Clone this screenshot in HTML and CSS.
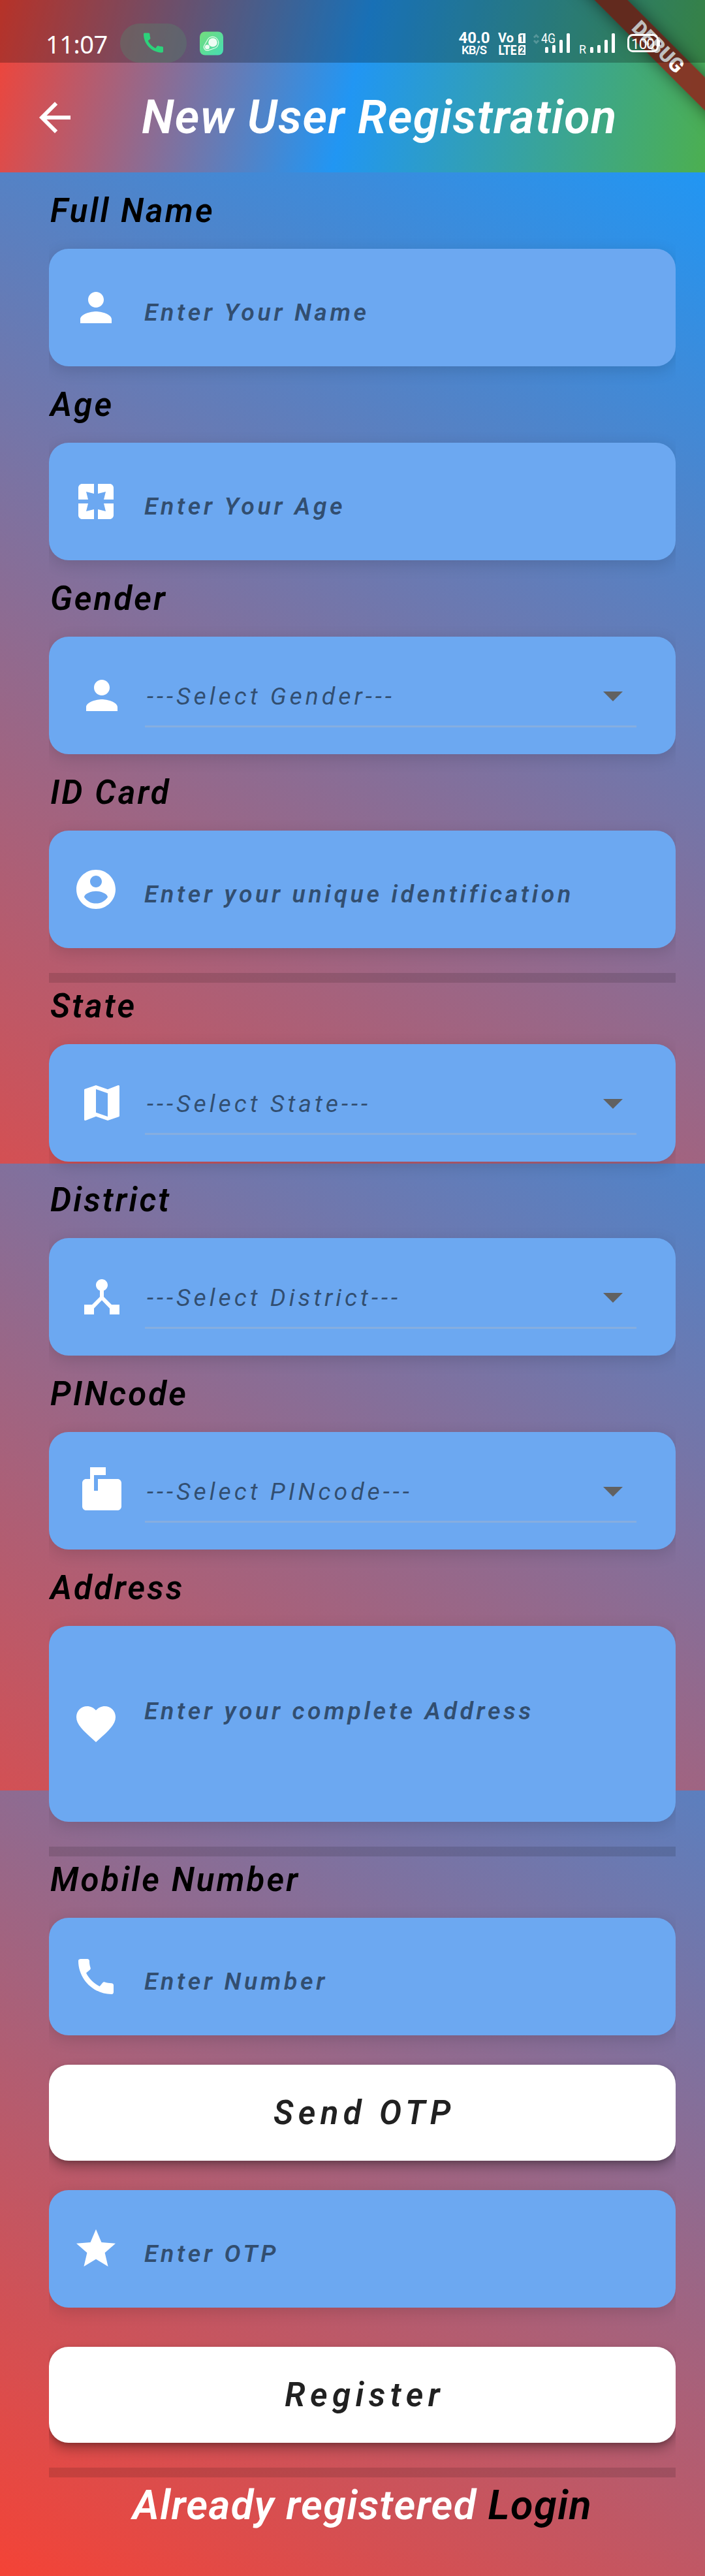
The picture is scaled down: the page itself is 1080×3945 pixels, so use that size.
FILE: index.html
```html
<!DOCTYPE html>
<html lang="en">
<head>
<meta charset="utf-8">
<title>New User Registration</title>
<link rel="stylesheet" href="styles.css">
</head>
<body>
<div class="phone">
  <header class="appbar">
    <svg class="icon back" viewBox="0 0 24 24"><path d="M20 11H7.83l5.59-5.59L12 4l-8 8 8 8 1.41-1.41L7.83 13H20v-2z"/></svg>
    <h1 class="title">New User Registration</h1>
    <div class="debug"><span class="debug-band">DEBUG</span></div>
    <div class="status">
      <span class="clock">11:07</span>
      <span class="call-pill"><svg class="call" viewBox="3 3 18 18"><path d="M20.01 15.38c-1.23 0-2.42-.2-3.53-.56-.35-.12-.74-.03-1.01.24l-1.57 1.97c-2.83-1.35-5.48-3.9-6.89-6.83l1.95-1.66c.27-.28.35-.67.24-1.02-.37-1.11-.56-2.3-.56-3.53 0-.54-.45-.99-.99-.99H4.19C3.65 3 3 3.24 3 3.99 3 13.28 10.73 21 20.01 21c.71 0 .99-.63.99-1.18v-3.45c0-.54-.45-.99-.99-.99z"/></svg></span>
      <svg class="app-badge" viewBox="0 0 36 36">
        <defs>
          <linearGradient id="badge" x1="0" y1="0" x2="1" y2="1"><stop offset="0" stop-color="#74dc7c"/><stop offset="1" stop-color="#46deb4"/></linearGradient>
        </defs>
        <rect width="36" height="36" rx="8" fill="url(#badge)"/>
        <path d="M7 21 L12.500 11.500 A9 9 0 1 1 23 25.300 L12.500 28.800 A5.300 5.300 0 0 1 7 21Z" fill="none" stroke="#e4fbea" stroke-width="1.200"/>
        <circle cx="20" cy="16.500" r="6.800" fill="#effcf3"/>
        <circle cx="11.500" cy="23.500" r="3.500" fill="#effcf3"/>
      </svg>
      <svg class="signals" viewBox="690 36 330 60">
        <g class="st-text">
          <text x="726.500" y="66" text-anchor="middle" font-size="24" font-weight="700" textLength="48">40.0</text>
          <text x="726.500" y="83" text-anchor="middle" font-size="18.500" font-weight="600" textLength="39">KB/S</text>
          <text x="763" y="65" font-size="20" font-weight="700" textLength="24">Vo</text>
          <text x="763.500" y="84" font-size="20.500" font-weight="800" textLength="28" lengthAdjust="spacingAndGlyphs">LTE</text>
          <text x="829" y="65.500" font-size="20" textLength="22" lengthAdjust="spacingAndGlyphs">4G</text>
          <text x="887" y="82" font-size="18" textLength="11" lengthAdjust="spacingAndGlyphs">R</text>
          <text x="967" y="75" font-size="22.500" textLength="36">100</text>
        </g>
        <path d="M796.500 51H805V66H794V53.500zM794 71.500 796.500 69H805V84H794z" fill="#fff"/>
        <text class="sim" x="795.500" y="63.500">1</text>
        <text class="sim" x="795.500" y="81.500">2</text>
        <path d="M818 57.500 821.500 54 825 57.500M818 62 821.500 65.500 825 62" fill="none" stroke="#fff" stroke-opacity=".22" stroke-width="3"/>
        <g fill="#fff">
          <rect x="835" y="72" width="5" height="9" rx="1.500"/><rect x="846" y="69" width="5" height="12" rx="1.500"/><rect x="857" y="61" width="5" height="20" rx="1.500"/><rect x="868" y="51" width="5" height="30" rx="1.500"/>
          <rect x="904" y="72" width="5" height="9" rx="1.500"/><rect x="915" y="69" width="5" height="12" rx="1.500"/><rect x="926" y="61" width="5" height="20" rx="1.500"/><rect x="937" y="51" width="5" height="30" rx="1.500"/>
          <rect x="1007.500" y="61" width="3.500" height="10" rx="1.500"/>
        </g>
        <rect x="962.500" y="53.500" width="45" height="25" rx="7" fill="none" stroke="#fff" stroke-width="3"/>
      </svg>
    </div>
  </header>

  <main class="screen">
    <div class="backdrop">
      <div class="bg bg-top"></div>
      <div class="bg bg-middle"></div>
      <div class="bg bg-bottom"></div>
    </div>

    <form class="form">
      <label class="label first">Full Name</label>
      <div class="field">
        <svg class="icon" viewBox="0 0 24 24"><path d="M12 12c2.210 0 4-1.790 4-4s-1.790-4-4-4-4 1.790-4 4 1.790 4 4 4zm0 2c-2.670 0-8 1.340-8 4v2h16v-2c0-2.660-5.330-4-8-4z"/></svg>
        <span class="hint">Enter Your Name</span>
      </div>

      <label class="label">Age</label>
      <div class="field">
        <svg class="icon" viewBox="0 0 24 24"><path d="M3 5v6h5L7 7l4 1V3H5c-1.100 0-2 .9-2 2zm5 8H3v6c0 1.100.9 2 2 2h6v-5l-4 1 1-4zm9 4l-4-1v5h6c1.100 0 2-.9 2-2v-6h-5l1 4zm2-14h-6v5l4-1-1 4h5V5c0-1.100-.9-2-2-2z"/></svg>
        <span class="hint">Enter Your Age</span>
      </div>

      <label class="label">Gender</label>
      <div class="field dropdown">
        <svg class="icon" viewBox="0 0 24 24"><path d="M12 12c2.210 0 4-1.790 4-4s-1.790-4-4-4-4 1.790-4 4 1.790 4 4 4zm0 2c-2.670 0-8 1.340-8 4v2h16v-2c0-2.660-5.330-4-8-4z"/></svg>
        <div class="select"><span>---Select Gender---</span><svg class="icon arrow" viewBox="0 0 24 24"><path d="M7 10l5 5 5-5z"/></svg></div>
      </div>

      <label class="label">ID Card</label>
      <div class="field">
        <svg class="icon" viewBox="0 0 24 24"><path d="M12 2C6.480 2 2 6.480 2 12s4.480 10 10 10 10-4.480 10-10S17.520 2 12 2zm0 3c1.660 0 3 1.340 3 3s-1.340 3-3 3-3-1.340-3-3 1.340-3 3-3zm0 14.200c-2.500 0-4.710-1.280-6-3.220.03-1.990 4-3.080 6-3.080 1.990 0 5.970 1.090 6 3.080-1.290 1.940-3.500 3.220-6 3.220z"/></svg>
        <span class="hint">Enter your unique identification</span>
      </div>

      <div class="divider"></div>

      <label class="label after-divider">State</label>
      <div class="field dropdown">
        <svg class="icon" viewBox="0 0 24 24"><path d="M20.500 3l-.16.03L15 5.100 9 3 3.360 4.900c-.21.07-.36.25-.36.48V20.500c0 .28.22.5.5.5l.16-.03L9 18.900l6 2.100 5.640-1.900c.21-.07.36-.25.36-.48V3.500c0-.28-.22-.5-.5-.5zM15 19l-6-2.110V5l6 2.110V19z"/></svg>
        <div class="select"><span>---Select State---</span><svg class="icon arrow" viewBox="0 0 24 24"><path d="M7 10l5 5 5-5z"/></svg></div>
      </div>

      <label class="label">District</label>
      <div class="field dropdown">
        <svg class="icon" viewBox="0 0 24 24"><path d="M17 16l-4-4V8.820C14.160 8.400 15 7.300 15 6c0-1.660-1.340-3-3-3S9 4.340 9 6c0 1.300.84 2.400 2 2.820V12l-4 4H3v5h5v-3.050l4-4.200 4 4.200V21h5v-5h-4z"/></svg>
        <div class="select"><span>---Select District---</span><svg class="icon arrow" viewBox="0 0 24 24"><path d="M7 10l5 5 5-5z"/></svg></div>
      </div>

      <label class="label">PINcode</label>
      <div class="field dropdown">
        <svg class="icon" viewBox="0 0 24 24"><path d="M20 6H10v6H8V4h6V0H6v6H4c-1.100 0-2 .9-2 2v12c0 1.100.9 2 2 2h16c1.100 0 2-.9 2-2V8c0-1.100-.9-2-2-2z"/></svg>
        <div class="select"><span>---Select PINcode---</span><svg class="icon arrow" viewBox="0 0 24 24"><path d="M7 10l5 5 5-5z"/></svg></div>
      </div>

      <label class="label">Address</label>
      <div class="field address">
        <svg class="icon" viewBox="0 0 24 24"><path d="M12 21.350l-1.450-1.320C5.400 15.360 2 12.280 2 8.500 2 5.420 4.420 3 7.500 3c1.740 0 3.410.81 4.500 2.090C13.090 3.810 14.760 3 16.500 3 19.580 3 22 5.420 22 8.500c0 3.780-3.400 6.860-8.550 11.540L12 21.350z"/></svg>
        <span class="hint">Enter your complete Address</span>
      </div>

      <div class="divider"></div>

      <label class="label after-divider">Mobile Number</label>
      <div class="field">
        <svg class="icon" viewBox="0 0 24 24"><path d="M20.010 15.380c-1.230 0-2.420-.2-3.530-.56-.35-.12-.74-.03-1.010.24l-1.570 1.970c-2.830-1.350-5.480-3.900-6.890-6.830l1.950-1.660c.27-.28.35-.67.24-1.020-.37-1.110-.56-2.300-.56-3.530 0-.54-.45-.99-.99-.99H4.190C3.650 3 3 3.240 3 3.990 3 13.280 10.730 21 20.010 21c.71 0 .99-.63.99-1.180v-3.450c0-.54-.45-.99-.99-.99z"/></svg>
        <span class="hint">Enter Number</span>
      </div>

      <button type="button" class="button send">Send OTP</button>

      <div class="field">
        <svg class="icon" viewBox="0 0 24 24"><path d="M12 17.270L18.180 21l-1.640-7.030L22 9.240l-7.190-.61L12 2 9.190 8.630 2 9.240l5.460 4.730L5.820 21z"/></svg>
        <span class="hint">Enter OTP</span>
      </div>

      <button type="button" class="button register">Register</button>

      <div class="divider"></div>

      <p class="footer">Already registered <a class="login">Login</a></p>
    </form>
  </main>
</div>
</body>
</html>
```
FILE: styles.css
```css
* { box-sizing: border-box; }

body {
  margin: 0;
  font-family: Roboto, "Noto Sans", sans-serif;
}

.phone {
  width: 1080px;
  height: 3945px;
  overflow: hidden;
}

.icon {
  width: 72px;
  height: 72px;
  flex: none;
  fill: #fff;
}

/* App bar, with the system status bar laid over it */

.appbar {
  position: relative;
  display: flex;
  align-items: center;
  height: 264px;
  padding: 96px 0 0 48px;
  background: linear-gradient(103.74deg, #f44336, #2196f3 50%, #4caf50);
}

.title {
  margin: 0 0 0 97px;
  font-size: 72px;
  font-style: italic;
  font-weight: 600;
  line-height: 84px;
  letter-spacing: 1.4px;
  color: #fff;
  white-space: nowrap;
}

.status {
  position: absolute;
  inset: 0 0 auto 0;
  display: flex;
  height: 96px;
  padding: 36px 60px 0 70px;
  background: rgba(0, 0, 0, .25);
  color: #fff;
}

.clock {
  width: 114px;
  font-family: "Noto Sans", sans-serif;
  font-size: 38px;
  line-height: 63px;
  letter-spacing: -.5px;
}

.call-pill {
  display: flex;
  align-items: center;
  justify-content: center;
  width: 102px;
  height: 60px;
  padding-bottom: 2px;
  border-radius: 30px;
  background: rgba(88, 128, 108, .4);
}

.call {
  width: 30px;
  height: 31px;
  fill: #2dd27b;
}

.app-badge {
  width: 36px;
  height: 37px;
  margin: 12px auto 0 20px;
}

.signals {
  width: 330px;
  height: 60px;
}

.st-text {
  fill: #fff;
  font-family: Roboto, sans-serif;
}

.sim {
  fill: #2b6f76;
  font: 700 14px Roboto, sans-serif;
}

/* Corner ribbon */

.debug {
  position: absolute;
  top: 0;
  right: 0;
  width: 300px;
  height: 264px;
  overflow: hidden;
}

.debug-band {
  position: absolute;
  left: 28px;
  top: 53.500px;
  width: 400px;
  height: 36px;
  background: rgba(136, 49, 35, .94);
  box-shadow: 0 0 24px rgba(0, 0, 0, .5);
  color: #fff;
  font-size: 30.6px;
  font-weight: 900;
  line-height: 36px;
  text-align: center;
  transform: rotate(45deg);
}

/* Scrolled screen: the gradient restarts in each of the three parts */

.screen { display: grid; }

.backdrop,
.form { grid-area: 1 / 1; }

.bg {
  background-image: linear-gradient(209.6deg, #2196f3, #f44336);
  background-size: 1080px 1900px;
}

.bg-top { height: 1518px; background-position: 0 0; }
.bg-middle { height: 960px; background-position: 0 -540px; }
.bg-bottom { height: 1203px; background-position: 0 -697px; }

.form {
  display: flex;
  flex-direction: column;
  z-index: 1;
  margin: 0 45px 0 75px;
  overflow-x: clip;
}

.label {
  margin: 30px 0;
  padding-left: 2px;
  font-size: 51px;
  font-style: italic;
  font-weight: 600;
  line-height: 57px;
  letter-spacing: 3.1px;
  color: #000;
}

.after-divider { margin-top: 0; }

.field {
  display: flex;
  align-items: center;
  gap: 38px;
  height: 180px;
  padding-left: 36px;
  border-radius: 30px;
  background: #6ca8f1;
  box-shadow: 0 6px 24px rgba(0, 0, 0, .14);
}

.hint {
  margin-top: 13px;
  font-size: 37.500px;
  font-style: italic;
  font-weight: 600;
  line-height: 44px;
  letter-spacing: 4.6px;
  color: rgba(0, 0, 0, .54);
  white-space: nowrap;
}

.address { height: 300px; }
.address .hint { margin: 0 0 40px; }

.dropdown {
  gap: 30px;
  padding: 0 60px 0 45px;
}

.select {
  display: flex;
  flex: 1;
  align-items: center;
  justify-content: space-between;
  height: 95px;
  margin-top: 3px;
  padding-left: 3px;
  border-bottom: 3px solid #86aee0;
  font-size: 37.500px;
  font-style: italic;
  line-height: 44px;
  letter-spacing: 4.95px;
  color: rgba(0, 0, 0, .54);
  white-space: nowrap;
}

.select span { padding-top: 2px; }

.arrow { fill: #616161; }

.divider {
  height: 15px;
  margin: 37.500px 0 7.500px;
  background: rgba(0, 0, 0, .12);
}

.button {
  flex: none;
  height: 147px;
  padding: 0 0 0 7px;
  border: 0;
  border-radius: 30px;
  background: #fff;
  box-shadow: 0 9px 18px rgba(0, 0, 0, .3), 0 3px 6px rgba(0, 0, 0, .14);
  color: #212121;
  font: italic 600 51px/60px Roboto, sans-serif;
  letter-spacing: 7.4px;
}

.send { margin: 45px 0; }
.register { margin-top: 60px; }

.footer {
  margin: 0;
  font-size: 63px;
  font-style: italic;
  font-weight: 600;
  line-height: 72px;
  letter-spacing: 1.4px;
  text-align: center;
  color: #fff;
  white-space: nowrap;
}

.login { color: #000; }
```
